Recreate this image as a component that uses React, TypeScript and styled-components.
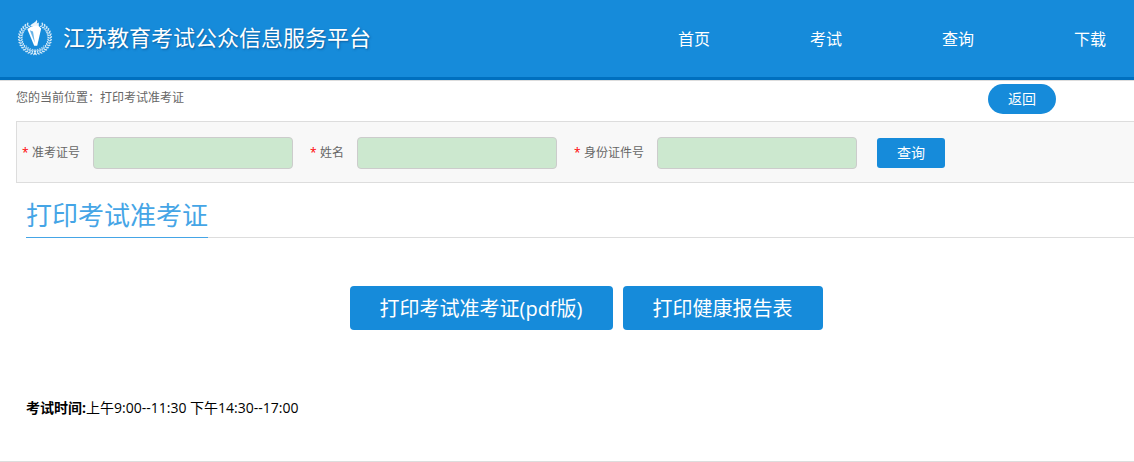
import React from "react";
import styled, { createGlobalStyle } from "styled-components";

const BLUE = "#168bda";
const LINE = "#dddddd";

const GlobalStyle = createGlobalStyle`
  * { box-sizing: border-box; }
  body {
    margin: 0;
    background: #fff;
    color: #000;
    font-family: "Open Sans", "Noto Sans CJK SC", sans-serif;
    font-size: 14px;
  }
  button, input { font-family: inherit; }
`;

const Header = styled.header`
  display: flex;
  align-items: center;
  justify-content: space-between;
  height: 80px;
  padding: 0 28px 0 16px;
  background: ${BLUE};
  border-bottom: 3px solid #0070bf;
  box-shadow: 0 1px 0 ${LINE};
`;

const Brand = styled.a`
  display: flex;
  align-items: center;
  gap: 9px;
  padding-bottom: 4px;
  color: #fff;
  font-size: 22px;
  line-height: 32px;
  white-space: nowrap;
  text-decoration: none;
  text-shadow: 1px 1px 2px rgba(0, 50, 100, 0.5);
`;

const Nav = styled.nav`
  display: flex;
  gap: 100px;
`;

const NavLink = styled.a`
  color: #fff;
  font-size: 16px;
  line-height: 24px;
  white-space: nowrap;
  text-decoration: none;
`;

const LocationBar = styled.div`
  display: flex;
  align-items: flex-start;
  justify-content: space-between;
  padding: 4px 78px 7px 16px;
`;

const Location = styled.p`
  margin: 0;
  padding-top: 4px;
  color: #666;
  font-size: 12px;
  line-height: 20px;
`;

const Button = styled.button<{ $pill?: boolean; $large?: boolean }>`
  height: ${(p) => (p.$large ? 44 : 30)}px;
  padding: 0 ${(p) => (p.$large ? 30 : 20)}px 2px;
  border: 0;
  border-radius: ${(p) => (p.$pill ? 15 : p.$large ? 4 : 3)}px;
  background: ${BLUE};
  color: #fff;
  font-size: ${(p) => (p.$large ? 20 : 14)}px;
  white-space: nowrap;
  cursor: pointer;
`;

const SearchForm = styled.form`
  display: flex;
  align-items: center;
  margin-left: 16px;
  padding: 15px 0 13px 5px;
  background: #f8f8f8;
  border: 1px solid ${LINE};
  border-right: 0;
`;

const Field = styled.label`
  display: flex;
  align-items: center;
  margin-right: 17px;
  color: #666;
  font-size: 12px;
  line-height: 20px;
  white-space: nowrap;
`;

const Required = styled.span`
  width: 10px;
  color: #f00;
`;

const TextBox = styled.input`
  width: 200px;
  height: 32px;
  margin-left: 13px;
  padding: 0 8px;
  border: 1px solid #ccc;
  border-radius: 4px;
  background: #cce8cf;
`;

const SearchAction = styled.div`
  padding-left: 3px;
`;

const Content = styled.main`
  padding: 12px 0 43px 26px;
  border-bottom: 1px solid ${LINE};
`;

const TitleBar = styled.div`
  display: flex;
  border-bottom: 1px solid ${LINE};
`;

const Title = styled.h1`
  margin: 0 0 -1px;
  padding-bottom: 1px;
  border-bottom: 1px solid #45a5e6;
  color: #45a5e6;
  font-size: 26px;
  font-weight: 400;
  line-height: 41px;
`;

const Actions = styled.div`
  display: flex;
  justify-content: center;
  gap: 10px;
  padding: 48px 0 68px 12px;
`;

const ExamTime = styled.p`
  margin: 0;
  font-size: 14px;
  line-height: 20px;
`;

const LEAF_ANGLES = [28, 38, 48, 58, 68, 78, 88, 98, 108, 118, 128, 138, 148, 158, 168, 178];

function Emblem() {
  return (
    <svg width="38" height="38" viewBox="0 0 38 38" aria-hidden="true">
      {[1, -1].map((side) => (
        <g key={side} transform={side === 1 ? undefined : "translate(38 0) scale(-1 1)"}>
          {LEAF_ANGLES.map((angle) => (
            <g key={angle} transform={`rotate(${angle} 19 20)`} fill="#fff" fillOpacity="0.8">
              <ellipse cx="19" cy="4.2" rx="0.8" ry="1.7" transform="rotate(-42 19 4.2)" />
              <ellipse cx="19" cy="6.6" rx="0.7" ry="1.5" transform="rotate(42 19 6.6)" />
            </g>
          ))}
        </g>
      ))}
      <path d="M10 27.5A11.5 11.5 0 0 0 28 27.5" fill="none" stroke="#fff" strokeWidth="1.2" strokeDasharray="1.4 1" opacity=".6" />
      <path d="M14.2 8.2C15 5.4 19.5 5.2 20.6 1.8C21.6 3.2 21.4 4.6 20.6 5.6L22.8 4.6V8.6L14.2 8.2Z" fill="#fff" opacity=".9" />
      <path d="M11.4 11.2C14 8.2 19 7 23 8.2L25.2 10.6L21.2 27.8H18.2Z" fill="#fff" />
      <path d="M13.8 12.2L17 13.6L18.9 25Z" fill={BLUE} opacity=".65" />
    </svg>
  );
}

const navItems = ["首页", "考试", "查询", "下载"];
const fields = [
  { id: "ticket", label: "准考证号" },
  { id: "name", label: "姓名" },
  { id: "identity", label: "身份证件号" },
];

export default function App() {
  return (
    <>
      <GlobalStyle />
      <Header>
        <Brand href="#">
          <Emblem />
          江苏教育考试公众信息服务平台
        </Brand>
        <Nav>
          {navItems.map((item) => (
            <NavLink key={item} href="#">{item}</NavLink>
          ))}
        </Nav>
      </Header>
      <LocationBar>
        <Location>您的当前位置：打印考试准考证</Location>
        <Button type="button" $pill>返回</Button>
      </LocationBar>
      <SearchForm onSubmit={(e) => e.preventDefault()}>
        {fields.map(({ id, label }) => (
          <Field key={id} htmlFor={id}>
            <Required>*</Required>
            {label}
            <TextBox id={id} name={id} type="text" />
          </Field>
        ))}
        <SearchAction>
          <Button type="submit">查询</Button>
        </SearchAction>
      </SearchForm>
      <Content>
        <TitleBar>
          <Title>打印考试准考证</Title>
        </TitleBar>
        <Actions>
          <Button type="button" $large>打印考试准考证(pdf版)</Button>
          <Button type="button" $large>打印健康报告表</Button>
        </Actions>
        <ExamTime>
          <strong>考试时间:</strong>上午9:00--11:30 下午14:30--17:00
        </ExamTime>
      </Content>
    </>
  );
}
